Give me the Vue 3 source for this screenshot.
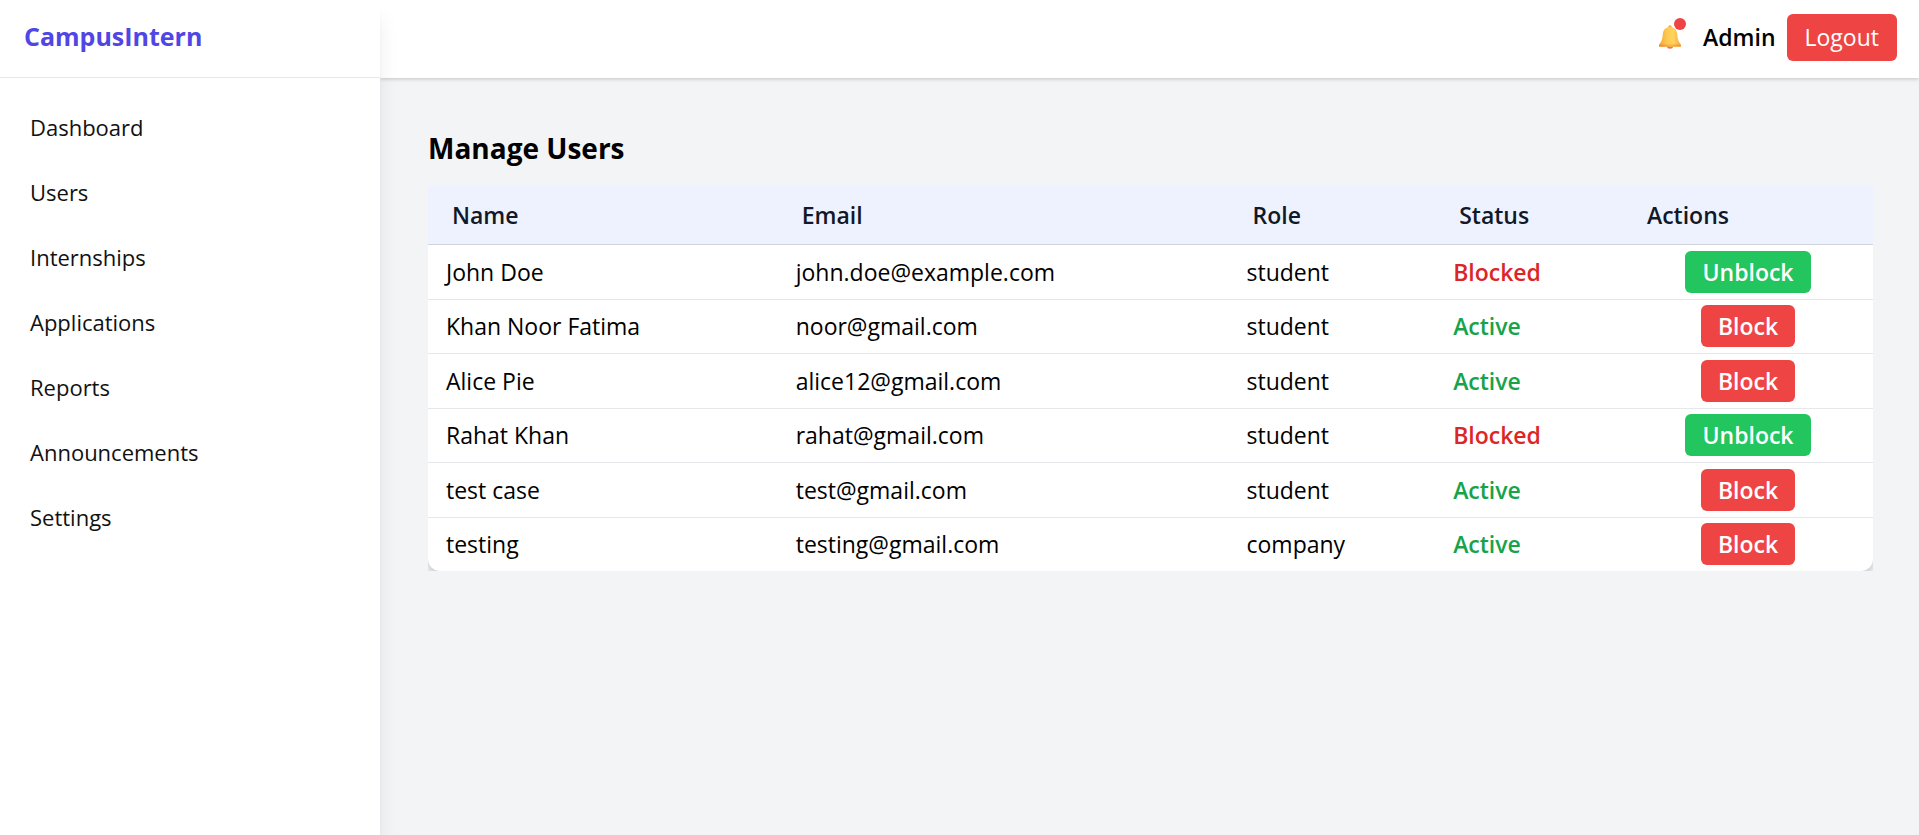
<script setup>
import { ref } from 'vue'

const links = ['Dashboard', 'Users', 'Internships', 'Applications', 'Reports', 'Announcements', 'Settings']
const columns = ['Name', 'Email', 'Role', 'Status', 'Actions']

const users = ref([
  { name: 'John Doe', email: 'john.doe@example.com', role: 'student', blocked: true },
  { name: 'Khan Noor Fatima', email: 'noor@gmail.com', role: 'student', blocked: false },
  { name: 'Alice Pie', email: 'alice12@gmail.com', role: 'student', blocked: false },
  { name: 'Rahat Khan', email: 'rahat@gmail.com', role: 'student', blocked: true },
  { name: 'test case', email: 'test@gmail.com', role: 'student', blocked: false },
  { name: 'testing', email: 'testing@gmail.com', role: 'company', blocked: false }
])
</script>

<template>
  <div class="layout">
    <aside class="sidebar">
      <div class="brand">CampusIntern</div>
      <nav class="nav">
        <a v-for="link in links" :key="link" href="#" class="nav-link">{{ link }}</a>
      </nav>
    </aside>

    <div class="content">
      <header class="topbar">
        <button type="button" class="bell" aria-label="Notifications">
          <svg viewBox="0 0 22 24" width="22" height="24" aria-hidden="true">
            <defs>
              <linearGradient id="bell-body" x1="0" y1="0" x2="1" y2="0">
                <stop offset="0" stop-color="#f3a53c" />
                <stop offset="0.35" stop-color="#fcc850" />
                <stop offset="0.65" stop-color="#ffd45c" />
                <stop offset="1" stop-color="#f5a93c" />
              </linearGradient>
              <linearGradient id="bell-rim" x1="0" y1="0" x2="1" y2="0">
                <stop offset="0" stop-color="#e58a35" />
                <stop offset="0.5" stop-color="#f9b544" />
                <stop offset="1" stop-color="#ee9838" />
              </linearGradient>
            </defs>
            <ellipse cx="11" cy="21.6" rx="3" ry="2.2" fill="#e8745a" />
            <circle cx="11" cy="1.9" r="1.7" fill="#f0a848" />
            <path d="M11 2C6.600 2 4.200 5 3.800 9C3.400 13.500 2.900 16 .8 18.600C.1 19.500 0 20.600 .3 21.400H21.700C22 20.600 21.900 19.500 21.200 18.600C19.100 16 18.600 13.500 18.200 9C17.800 5 15.400 2 11 2Z" fill="url(#bell-body)" />
            <path d="M.6 19.400H21.400C22 20.200 22 21 21.700 21.700H.3C0 21 0 20.200 .6 19.400Z" fill="url(#bell-rim)" />
          </svg>
          <span class="dot"></span>
        </button>
        <span class="admin">Admin</span>
        <button type="button" class="logout">Logout</button>
      </header>

      <main class="main">
        <h1 class="title">Manage Users</h1>
        <div class="table-wrap">
          <table class="users">
            <colgroup>
              <col class="c-name" /><col class="c-email" /><col class="c-role" /><col class="c-status" /><col class="c-actions" />
            </colgroup>
            <thead>
              <tr>
                <th v-for="column in columns" :key="column" scope="col">{{ column }}</th>
              </tr>
            </thead>
            <tbody>
              <tr v-for="user in users" :key="user.email">
                <td>{{ user.name }}</td>
                <td>{{ user.email }}</td>
                <td>{{ user.role }}</td>
                <td class="status" :class="user.blocked ? 'is-blocked' : 'is-active'">
                  {{ user.blocked ? 'Blocked' : 'Active' }}
                </td>
                <td class="action">
                  <button
                    type="button"
                    class="toggle"
                    :class="user.blocked ? 'unblock' : 'block'"
                    @click="user.blocked = !user.blocked"
                  >{{ user.blocked ? 'Unblock' : 'Block' }}</button>
                </td>
              </tr>
            </tbody>
          </table>
        </div>
      </main>
    </div>
  </div>
</template>

<style>
body {
  margin: 0;
  background: #f3f4f6;
}
</style>

<style scoped>
.layout {
  display: flex;
  min-height: 100vh;
  background: #f3f4f6;
  color: #000;
  font-family: "Open Sans", "Noto Sans", sans-serif;
  font-size: 23px;
  line-height: 36px;
}

.layout * {
  box-sizing: border-box;
}

button {
  border: 0;
  font: inherit;
  cursor: pointer;
}

.sidebar {
  position: relative;
  z-index: 1;
  flex: 0 0 380px;
  background: #fff;
  box-shadow: 0 15px 22px -4px rgba(0, 0, 0, 0.1), 0 6px 9px -6px rgba(0, 0, 0, 0.1);
}

.brand {
  height: 78px;
  padding: 18px 24px;
  border-bottom: 1px solid #e5e7eb;
  color: #4f46e5;
  font-size: 25px;
  font-weight: 700;
}

.nav {
  display: flex;
  flex-direction: column;
  gap: 5px;
  padding: 19px 18px;
}

.nav-link {
  padding: 12px;
  color: #111;
  font-size: 22px;
  text-decoration: none;
}

.content {
  flex: 1;
  min-width: 0;
}

.topbar {
  display: flex;
  align-items: center;
  justify-content: flex-end;
  height: 78px;
  padding: 0 22px 4px;
  background: #fff;
  box-shadow: 0 1px 4px rgba(0, 0, 0, 0.2);
}

.bell {
  position: relative;
  display: flex;
  margin-right: 22px;
  padding: 0;
  background: none;
}

.dot {
  position: absolute;
  top: -7px;
  right: -5px;
  width: 12px;
  height: 12px;
  border-radius: 50%;
  background: #ef4444;
}

.admin {
  margin-right: 11px;
  font-weight: 600;
}

.logout {
  padding: 5px 18px 6px;
  border-radius: 6px;
  background: #ef4444;
  color: #fff;
}

.main {
  padding: 48px 46px 48px 48px;
}

.title {
  margin: 0 0 16px;
  font-size: 28px;
  font-weight: 700;
  line-height: 44px;
}

.table-wrap {
  overflow: hidden;
}

.users {
  width: 100%;
  height: 385px;
  table-layout: fixed;
  border-spacing: 0;
  border-radius: 12px;
  background: #fff;
  box-shadow: 0 4px 9px rgba(0, 0, 0, 0.2);
}

.c-name { width: 24.2%; }
.c-email { width: 31.2%; }
.c-role { width: 14.3%; }
.c-status { width: 13%; }
.c-actions { width: 17.3%; }

th {
  height: 59px;
  padding: 0 24px;
  border-bottom: 1px solid #d1d5db;
  background: #eef2ff;
  color: #111827;
  font-weight: 600;
  text-align: left;
}

td {
  padding: 5px 18px;
  border-bottom: 1px solid #e5e7eb;
}

tbody tr:last-child td {
  border-bottom: 0;
}

.status {
  font-weight: 600;
}

.is-blocked { color: #dc2626; }
.is-active { color: #16a34a; }

.action {
  text-align: center;
}

.toggle {
  display: block;
  margin: 0 auto;
  padding: 3px 17px;
  border-radius: 6px;
  color: #fff;
  font-weight: 600;
}

.unblock { background: #22c55e; }
.block { background: #ef4444; }
</style>
